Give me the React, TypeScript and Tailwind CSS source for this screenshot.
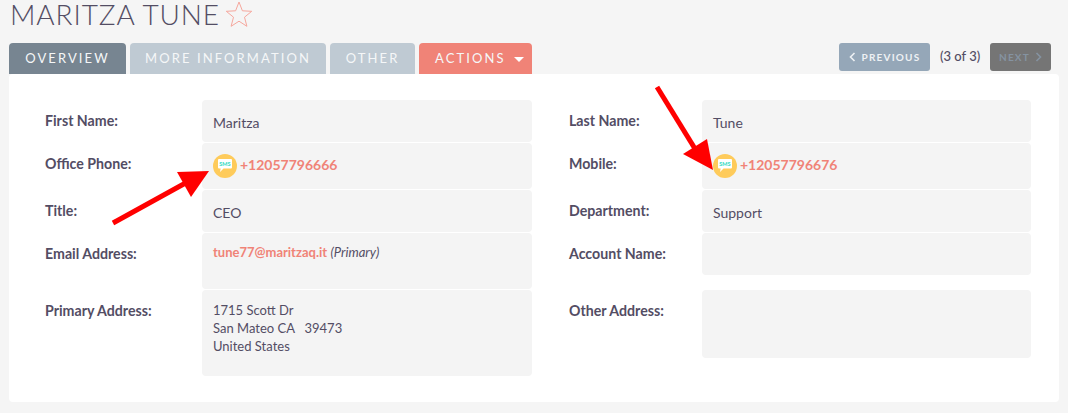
import React from 'react'

const labelClass = 'pt-[12px] text-[14.2px] leading-[18px] font-bold text-[#534d64]'
const valueClass = 'rounded-[4px] bg-[#f4f4f4] px-[11px] leading-[18px] text-[#534d64]'

function SmsIcon() {
  return (
    <svg width="24" height="24" viewBox="0 0 24 24" className="shrink-0">
      <circle cx="12" cy="12" r="12" fill="#fecb5b" />
      <path d="M6 5h12a1 1 0 0 1 1 1v7.5a1 1 0 0 1-1 1H10.5L7 18l.7-3.5H6a1 1 0 0 1-1-1V6a1 1 0 0 1 1-1z" fill="#fff" />
      <text x="12" y="11.6" textAnchor="middle" fontSize="5.5" fontWeight="900" fill="#3fdcc4" fontFamily="Lato, sans-serif">SMS</text>
    </svg>
  )
}

function Phone({ number }: { number: string }) {
  return (
    <div className="flex items-center gap-[3px] pt-[11px] font-bold text-[#f08377]">
      <SmsIcon />
      <span className="-mt-[2px]">{number}</span>
    </div>
  )
}

function Tab({ label, className }: { label: string; className: string }) {
  return (
    <div className={`flex h-[31px] items-center rounded-t-[4px] pt-[1px] text-[13px] tracking-[2.1px] text-[#f5f7f8] ${className}`}>
      {label}
    </div>
  )
}

export default function App() {
  return (
    <div className="relative h-[413px] w-[1068px] overflow-hidden bg-[#f5f5f5] font-['Lato',sans-serif]">
      {/* header */}
      <div className="flex h-[43px] items-start pl-[10px]">
        <h2 className="text-[28px] leading-[28px] font-light tracking-[0.9px] text-[#534d64]">MARITZA TUNE</h2>
        <svg width="28" height="27" viewBox="0 0 28 27" className="ml-[5px] mt-[1px]" fill="none" stroke="#f6a79d" strokeWidth="1">
          <path d="M14 1l3.4 8.8 9.3.5-7.2 5.9 2.4 9.1L14 20.2l-7.9 5.1 2.4-9.1-7.2-5.9 9.3-.5z" />
        </svg>
      </div>

      {/* tabs and pagination */}
      <div className="flex h-[31px] items-start pl-[9px]">
        <Tab label="OVERVIEW" className="w-[117px] justify-center bg-[#778591]" />
        <Tab label="MORE INFORMATION" className="ml-[4px] w-[196px] justify-center bg-[#bfcad3]" />
        <Tab label="OTHER" className="ml-[4px] w-[85px] justify-center bg-[#bfcad3]" />
        <Tab label="ACTIONS" className="ml-[4px] w-[113px] bg-[#f08377] pl-[16px]" />
        <div className="ml-[-18px] mt-[14px] h-0 w-0 border-x-[5px] border-t-[5px] border-x-transparent border-t-white" />
        <div className="ml-auto flex h-[28px] items-center pr-[17px]">
          <div className="flex h-[28px] w-[91px] items-center justify-center gap-[6px] rounded-[3px] bg-[#95a7b8] text-[10px] font-bold tracking-[1.2px] text-[#eef1f4]">
            <svg width="7" height="10" viewBox="0 0 7 10" fill="none" stroke="#eef1f4" strokeWidth="1.6"><path d="M5.5 1L1.5 5l4 4" /></svg>
            PREVIOUS
          </div>
          <span className="mx-[10px] w-[40px] whitespace-nowrap text-[13px] font-medium text-[#534d64]">(3 of 3)</span>
          <div className="flex h-[28px] w-[61px] items-center justify-center gap-[5px] rounded-[3px] bg-[#757575] text-[10px] font-bold tracking-[1.2px] text-[#8593a1]">
            NEXT
            <svg width="7" height="10" viewBox="0 0 7 10" fill="none" stroke="#8593a1" strokeWidth="1.6"><path d="M1.5 1l4 4-4 4" /></svg>
          </div>
        </div>
      </div>

      {/* detail card */}
      <div className="ml-[9px] w-[1050px] rounded-[4px] bg-white pb-[26px] pl-[36px] pt-[26px]">
        <div className="grid grid-cols-[157px_330px_170px_329px] grid-rows-[42px_46px_42px_56px_86px] gap-y-[1px]">
          <div className={labelClass}>First Name:</div>
          <div className={`${valueClass} pt-[14px] text-[14px]`}>Maritza</div>
          <div className={`${labelClass} pl-[37px]`}>Last Name:</div>
          <div className={`${valueClass} pt-[14px] text-[14px]`}>Tune</div>

          <div className={labelClass}>Office Phone:</div>
          <div className={`${valueClass} text-[14px]`}><Phone number="+12057796666" /></div>
          <div className={`${labelClass} pl-[37px]`}>Mobile:</div>
          <div className={`${valueClass} text-[14px]`}><Phone number="+12057796676" /></div>

          <div className={labelClass}>Title:</div>
          <div className={`${valueClass} pt-[14px] text-[14px]`}>CEO</div>
          <div className={`${labelClass} pl-[37px]`}>Department:</div>
          <div className={`${valueClass} pt-[14px] text-[14px]`}>Support</div>

          <div className={labelClass}>Email Address:</div>
          <div className={`${valueClass} pt-[10px] text-[13px]`}>
            <span className="font-bold text-[#f08377]">tune77@maritzaq.it</span> <em className="text-[#534d64]">(Primary)</em>
          </div>
          <div className={`${labelClass} pl-[37px]`}>Account Name:</div>
          <div className={`${valueClass} h-[42px]`} />

          <div className={labelClass}>Primary Address:</div>
          <div className={`${valueClass} pt-[11px] text-[13px]`}>
            1715 Scott Dr
            <br />
            San Mateo CA&nbsp;&nbsp; 39473
            <br />
            United States
          </div>
          <div className={`${labelClass} pl-[37px]`}>Other Address:</div>
          <div className={`${valueClass} h-[68px]`} />
        </div>
      </div>

      {/* annotation arrows */}
      <svg width="1068" height="413" viewBox="0 0 1068 413" className="pointer-events-none absolute left-0 top-0">
        <path d="M113 223L191 180" stroke="#ff0000" strokeWidth="5" fill="none" />
        <path d="M177 172L209 171L191 197z" fill="#ff0000" />
        <path d="M657 87L697 152" stroke="#ff0000" strokeWidth="5" fill="none" />
        <path d="M707 139L713 170L683 154z" fill="#ff0000" />
      </svg>
    </div>
  )
}
